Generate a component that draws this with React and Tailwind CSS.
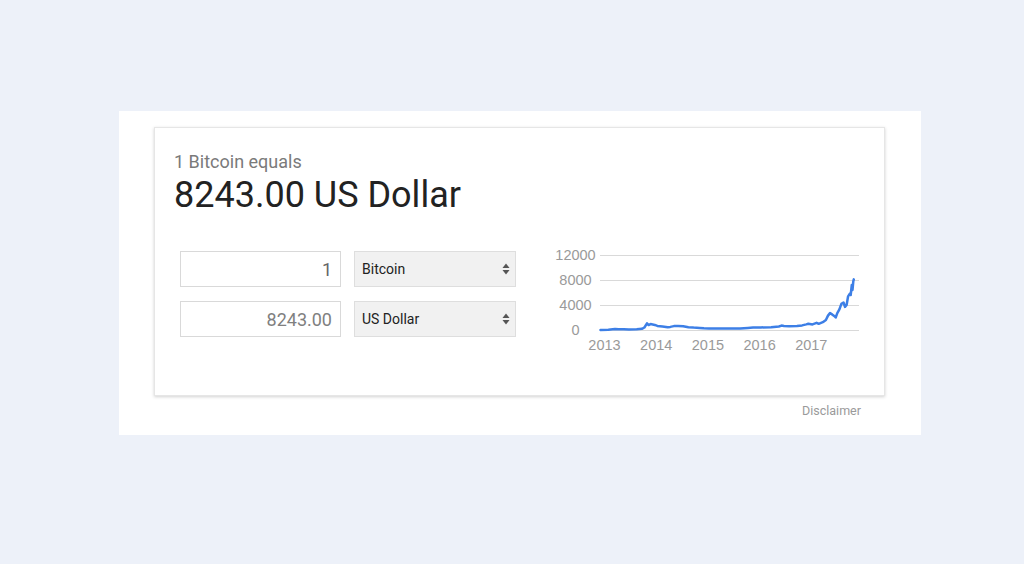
import React from "react";

const data = [
  [2013.0, 13], [2013.15, 40], [2013.28, 140], [2013.35, 110], [2013.45, 120], [2013.55, 90],
  [2013.7, 130], [2013.8, 200], [2013.85, 400], [2013.9, 1050], [2013.93, 800], [2013.97, 950],
  [2014.05, 820], [2014.1, 650], [2014.2, 560], [2014.3, 450], [2014.35, 500], [2014.42, 620],
  [2014.5, 640], [2014.6, 600], [2014.7, 450], [2014.8, 380], [2014.92, 340], [2015.0, 280],
  [2015.1, 230], [2015.3, 240], [2015.5, 260], [2015.7, 240], [2015.85, 330], [2015.95, 420],
  [2016.1, 420], [2016.3, 440], [2016.45, 560], [2016.5, 700], [2016.55, 640], [2016.65, 600],
  [2016.8, 620], [2016.9, 740], [2016.98, 900], [2017.02, 1000], [2017.1, 900], [2017.18, 1150],
  [2017.22, 1000], [2017.3, 1250], [2017.36, 1600], [2017.4, 2300], [2017.44, 2700],
  [2017.48, 2500], [2017.52, 2250], [2017.55, 2000], [2017.58, 2700], [2017.62, 3300],
  [2017.66, 4200], [2017.7, 4400], [2017.73, 3700], [2017.76, 4000], [2017.79, 5400],
  [2017.82, 5800], [2017.84, 5600], [2017.86, 7200], [2017.875, 6400], [2017.89, 7800],
  [2017.9, 8100],
];

function Chart() {
  const x0 = 59.5;
  const perYear = 51.7;
  const zeroY = 87;
  const pts = data
    .map(([t, p]) => {
      const x = x0 - 4 + perYear * (t - 2013);
      const y = zeroY - (p * 75) / 12000;
      return `${x.toFixed(1)},${y.toFixed(1)}`;
    })
    .join(" ");
  const grid = [
    [12, "12000"],
    [37, "8000"],
    [62, "4000"],
    [87, "0"],
  ];
  const years = ["2013", "2014", "2015", "2016", "2017"];
  return (
    <svg
      width="320"
      height="115"
      viewBox="0 0 320 115"
      className="-mt-[8px] ml-[29px] overflow-visible"
      style={{ fontFamily: "'Liberation Sans', Arial, sans-serif" }}
    >
      {grid.map(([y, label]) => (
        <g key={label}>
          <line x1="55" x2="314" y1={y + 0.5} y2={y + 0.5} stroke="#d9d9d9" strokeWidth="1" />
          <text x="30.5" y={y + 5} textAnchor="middle" fontSize="14.5" fill="#9a9a9a">
            {label}
          </text>
        </g>
      ))}
      {years.map((yr, i) => (
        <text
          key={yr}
          x={x0 + perYear * i}
          y="107"
          textAnchor="middle"
          fontSize="14.5"
          fill="#9a9a9a"
        >
          {yr}
        </text>
      ))}
      <polyline
        points={pts}
        fill="none"
        stroke="#3d7fe6"
        strokeWidth="2.5"
        strokeLinejoin="round"
        strokeLinecap="round"
      />
    </svg>
  );
}

function Arrows() {
  return (
    <svg width="8" height="12" viewBox="0 0 8 12" className="shrink-0">
      <path d="M4 0.5 L7.5 5 L0.5 5 Z" fill="#555" />
      <path d="M4 11.5 L7.5 7 L0.5 7 Z" fill="#555" />
    </svg>
  );
}

function Row({ value, valueColor, unit }) {
  return (
    <div className="flex gap-[13px]">
      <div
        className={`w-[161px] h-[36px] border border-[#d9d9d9] bg-white flex items-center justify-end pr-[8px] text-[18px] ${valueColor}`}
      >
        {value}
      </div>
      <div className="w-[162px] h-[36px] border border-[#dedede] bg-[#f1f1f1] flex items-center justify-between pl-[7px] pr-[5px] text-[14px] text-[#222]">
        <span>{unit}</span>
        <Arrows />
      </div>
    </div>
  );
}

export default function App() {
  return (
    <div
      className="w-full h-[564px] bg-[#edf1f9] pt-[111px] pl-[119px]"
      style={{ fontFamily: "Roboto, 'Liberation Sans', Arial, sans-serif" }}
    >
      <div className="w-[802px] h-[324px] bg-white pt-[16px] pl-[35px]">
        <div className="w-[731px] h-[269px] bg-white border border-[#e6e6e6] shadow-[0_1px_3px_rgba(0,0,0,0.18)] pt-[23px] px-[19px]">
          <div className="text-[18px] leading-[22px] text-[#7a7a7a]">1 Bitcoin equals</div>
          <div className="mt-[2px] text-[36px] leading-[40px] text-[#222]">8243.00 US Dollar</div>
          <div className="mt-[36px] flex items-start">
            <div className="ml-[6px] flex flex-col gap-[14px]">
              <Row value="1" valueColor="text-[#666]" unit="Bitcoin" />
              <Row value="8243.00" valueColor="text-[#808080]" unit="US Dollar" />
            </div>
            <Chart />
          </div>
        </div>
        <div className="w-[731px] mt-[8px] pr-[24px] text-right text-[12.5px] leading-[14px] text-[#9a9a9a]">
          Disclaimer
        </div>
      </div>
    </div>
  );
}
